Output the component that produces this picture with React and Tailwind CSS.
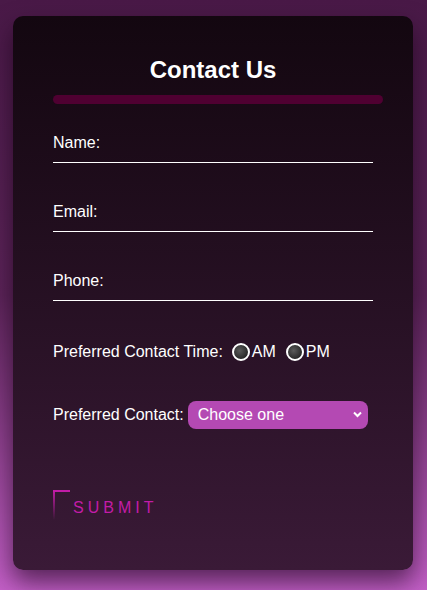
import React from 'react';

const Field = ({ label, type = 'text' }) => (
    <label className="block">
        <span className="block text-base leading-[18px] text-white">{label}</span>
        <input type={type} className="mt-[10px] block w-full h-[1px] border-0 border-b border-white bg-transparent outline-none" />
    </label>
);

const Radio = ({ label }) => (
    <label className="flex items-center">
        <input
            type="radio"
            name="time"
            className="appearance-none w-[18px] h-[18px] rounded-full border-2 border-white bg-[radial-gradient(circle_at_40%_40%,#5a5a5a,#141414)]"
        />
        <span className="ml-[2px]">{label}</span>
    </label>
);

export default function App() {
    return (
        <div className="min-h-[590px] bg-gradient-to-b from-[#491947] via-[#5c2459] to-[#c35fc7] pt-4 px-[13px] font-['Liberation_Sans',Arial,sans-serif]">
            <div className="w-[400px] h-[554px] rounded-[10px] bg-gradient-to-b from-[#130710] to-[#3a1a37] shadow-[0_12px_25px_rgba(20,0,20,0.6)] pt-[40px]">
                <h1 className="text-center text-2xl leading-[28px] font-bold text-white">Contact Us</h1>
                <div className="mt-[11px] ml-[40px] w-[330px] h-[9px] rounded-full bg-[#4f0031]" />

                <form className="px-[40px] pt-[30px]" onSubmit={e => e.preventDefault()}>
                    <div className="flex flex-col gap-[40px]">
                        <Field label="Name:" />
                        <Field label="Email:" type="email" />
                        <Field label="Phone:" type="tel" />
                    </div>

                    <div className="mt-[42px] flex items-center text-base leading-[18px] text-white">
                        <span className="mr-[9px]">Preferred Contact Time:</span>
                        <Radio label="AM" />
                        <span className="w-[10px]" />
                        <Radio label="PM" />
                    </div>

                    <div className="mt-[40px] flex items-center text-base text-white">
                        <span className="mr-[4px]">Preferred Contact:</span>
                        <div className="relative">
                            <select className="appearance-none w-[180px] h-[28px] rounded-[8px] bg-[#b449b3] pl-[10px] text-base text-white outline-none">
                                <option>Choose one</option>
                                <option>Email</option>
                                <option>Phone</option>
                            </select>
                            <svg className="pointer-events-none absolute right-[6px] top-[10px]" width="9" height="7" viewBox="0 0 9 7">
                                <path d="M1 1.5 L4.5 5 L8 1.5" stroke="white" strokeWidth="2" fill="none" />
                            </svg>
                        </div>
                    </div>

                    <button type="submit" className="relative mt-[61px] pl-[20px] pt-[9px] text-base leading-[18px] tracking-[4px] text-[#c21ca7]">
                        <span className="absolute left-0 top-0 w-[17px] h-[2px] bg-[#c21ca7]" />
                        <span className="absolute left-0 top-0 w-[2px] h-[30px] bg-gradient-to-b from-[#c21ca7] to-transparent" />
                        SUBMIT
                    </button>
                </form>
            </div>
        </div>
    );
}
